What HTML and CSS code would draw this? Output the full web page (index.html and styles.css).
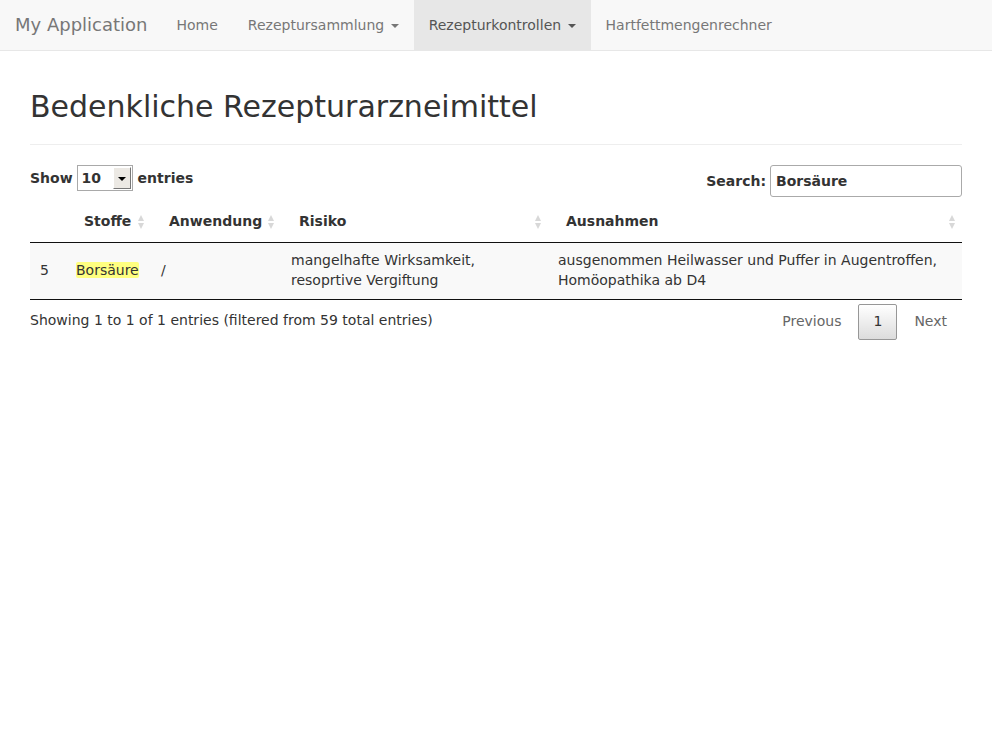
FILE: index.html
```html
<!DOCTYPE html>
<html lang="de">
<head>
<meta charset="utf-8">
<title>Bedenkliche Rezepturarzneimittel</title>
<link rel="stylesheet" href="styles.css">
</head>
<body>
<nav class="navbar">
  <a class="brand" href="#">My Application</a>
  <ul class="nav">
    <li><a href="#">Home</a></li>
    <li><a href="#">Rezeptursammlung <span class="caret"></span></a></li>
    <li class="active"><a href="#">Rezepturkontrollen <span class="caret"></span></a></li>
    <li><a href="#">Hartfettmengenrechner</a></li>
  </ul>
</nav>
<main class="content">
  <div class="page-header"><h1>Bedenkliche Rezepturarzneimittel</h1></div>
  <div class="dt-controls">
    <label class="dt-length">Show
      <span class="select"><span class="select-val">10</span><span class="select-btn"><span class="select-arrow"></span></span></span>
      entries</label>
    <label class="dt-filter">Search: <input class="search" type="search" value="Borsäure"></label>
  </div>
  <table class="dt">
    <colgroup>
      <col class="c1"><col class="c2"><col class="c3"><col class="c4"><col class="c5">
    </colgroup>
    <thead>
      <tr>
        <th class="nosort"></th>
        <th>Stoffe<span class="sort"><i class="up"></i><i class="down"></i></span></th>
        <th>Anwendung<span class="sort"><i class="up"></i><i class="down"></i></span></th>
        <th>Risiko<span class="sort"><i class="up"></i><i class="down"></i></span></th>
        <th>Ausnahmen<span class="sort"><i class="up"></i><i class="down"></i></span></th>
      </tr>
    </thead>
    <tbody>
      <tr class="odd">
        <td>5</td>
        <td><span class="hl">Borsäure</span></td>
        <td>/</td>
        <td>mangelhafte Wirksamkeit, resoprtive Vergiftung</td>
        <td>ausgenommen Heilwasser und Puffer in Augentroffen, Homöopathika ab D4</td>
      </tr>
    </tbody>
  </table>
  <div class="dt-footer">
    <div class="dt-info">Showing 1 to 1 of 1 entries (filtered from 59 total entries)</div>
    <div class="dt-paginate">
      <a class="pbtn disabled" href="#">Previous</a><a class="pbtn current" href="#">1</a><a class="pbtn disabled" href="#">Next</a>
    </div>
  </div>
</main>
</body>
</html>
```
FILE: styles.css
```css
html, body {
  margin: 0;
  padding: 0;
  background: #fff;
  font-family: "DejaVu Sans", sans-serif;
  font-size: 14px;
  line-height: 20px;
  color: #333;
}
a { text-decoration: none; }

.navbar {
  display: flex;
  height: 50px;
  background: #f8f8f8;
  border-bottom: 1px solid #e7e7e7;
}
.brand {
  display: block;
  padding: 15px 14px 15px 15px;
  font-size: 18px;
  line-height: 20px;
  color: #777;
}
.nav {
  display: flex;
  margin: 0;
  padding: 0;
  list-style: none;
}
.nav a {
  display: block;
  padding: 15px;
  line-height: 20px;
  color: #777;
}
.nav .active a {
  background: #e7e7e7;
  color: #555;
}
.caret {
  display: inline-block;
  width: 0;
  height: 0;
  margin-left: 2px;
  vertical-align: middle;
  border-top: 4px solid;
  border-left: 4px solid transparent;
  border-right: 4px solid transparent;
}

.content {
  padding: 0 30px;
}
.page-header {
  margin: 39px 0 20px;
  padding-bottom: 11px;
  border-bottom: 1px solid #eee;
}
.page-header h1 {
  margin: 0 0 10px;
  font-size: 30px;
  font-weight: 500;
  line-height: 33px;
  color: #333;
}

.dt-controls {
  display: flex;
  justify-content: space-between;
  align-items: flex-start;
  height: 32px;
}
.dt-length, .dt-filter {
  display: flex;
  align-items: center;
  font-weight: bold;
}
.dt-length { height: 25px; }
.select {
  display: inline-flex;
  align-items: stretch;
  box-sizing: border-box;
  width: 56px;
  height: 26px;
  margin: 0 5px 0 4px;
  border: 1px solid #a9a9a9;
  background: #fff;
}
.select-val {
  flex: 1;
  padding-left: 4px;
  line-height: 24px;
}
.select-btn {
  box-sizing: border-box;
  width: 18px;
  margin: 1px 1px 1px 0;
  background: #ece9e4;
  border: 1px solid #fff;
  border-right-color: #777;
  border-bottom-color: #777;
  display: flex;
  align-items: center;
  justify-content: center;
}
.select-arrow {
  width: 0;
  height: 0;
  border-top: 4px solid #000;
  border-left: 4px solid transparent;
  border-right: 4px solid transparent;
  margin-top: 3px;
}
.search {
  box-sizing: border-box;
  width: 192px;
  height: 32px;
  margin-left: 4px;
  padding: 5px;
  border: 1px solid #aaa;
  border-radius: 3px;
  font: bold 14px "DejaVu Sans", sans-serif;
  color: #333;
  background: #fff;
}

.dt {
  width: 100%;
  margin-top: 5px;
  table-layout: fixed;
  border-collapse: separate;
  border-spacing: 0;
  border-bottom: 1px solid #111;
}
.c1 { width: 36px; }
.c2 { width: 85px; }
.c3 { width: 130px; }
.c4 { width: 267px; }
.c5 { width: 414px; }
.dt th {
  position: relative;
  padding: 9px 18px 11px;
  text-align: left;
  font-weight: bold;
  border-bottom: 1px solid #111;
  white-space: nowrap;
}
.dt th.nosort { padding: 9px 10px 11px; }
.sort {
  position: absolute;
  right: 7px;
  top: 50%;
  margin-top: -7px;
  width: 7px;
  height: 14px;
  display: flex;
  flex-direction: column;
  justify-content: space-between;
  align-items: center;
}
.sort i {
  display: block;
  width: 0;
  height: 0;
  border-left: 3.5px solid transparent;
  border-right: 3.5px solid transparent;
}
.sort .up { border-bottom: 6px solid #d8d8d8; }
.sort .down { border-top: 6px solid #d8d8d8; }
.dt td {
  padding: 7px 10px 9px;
  vertical-align: middle;
}
.dt tr.odd td { background: #f9f9f9; }
.hl {
  background: #ffff80;
  border-radius: 2px;
}

.dt-footer {
  display: flex;
  justify-content: space-between;
  align-items: flex-start;
}
.dt-info {
  padding-top: 10px;
}
.dt-paginate {
  padding-top: 4px;
  display: flex;
}
.pbtn {
  display: inline-block;
  min-width: 21px;
  padding: 6px 14px 8px;
  margin-left: 2px;
  text-align: center;
  border: 1px solid transparent;
  border-radius: 2px;
  color: #333;
}
.pbtn.disabled { color: #666; }
.pbtn.current {
  border-color: #979797;
  background: linear-gradient(to bottom, #fff 0%, #dcdcdc 100%);
  min-width: 0;
}
```
